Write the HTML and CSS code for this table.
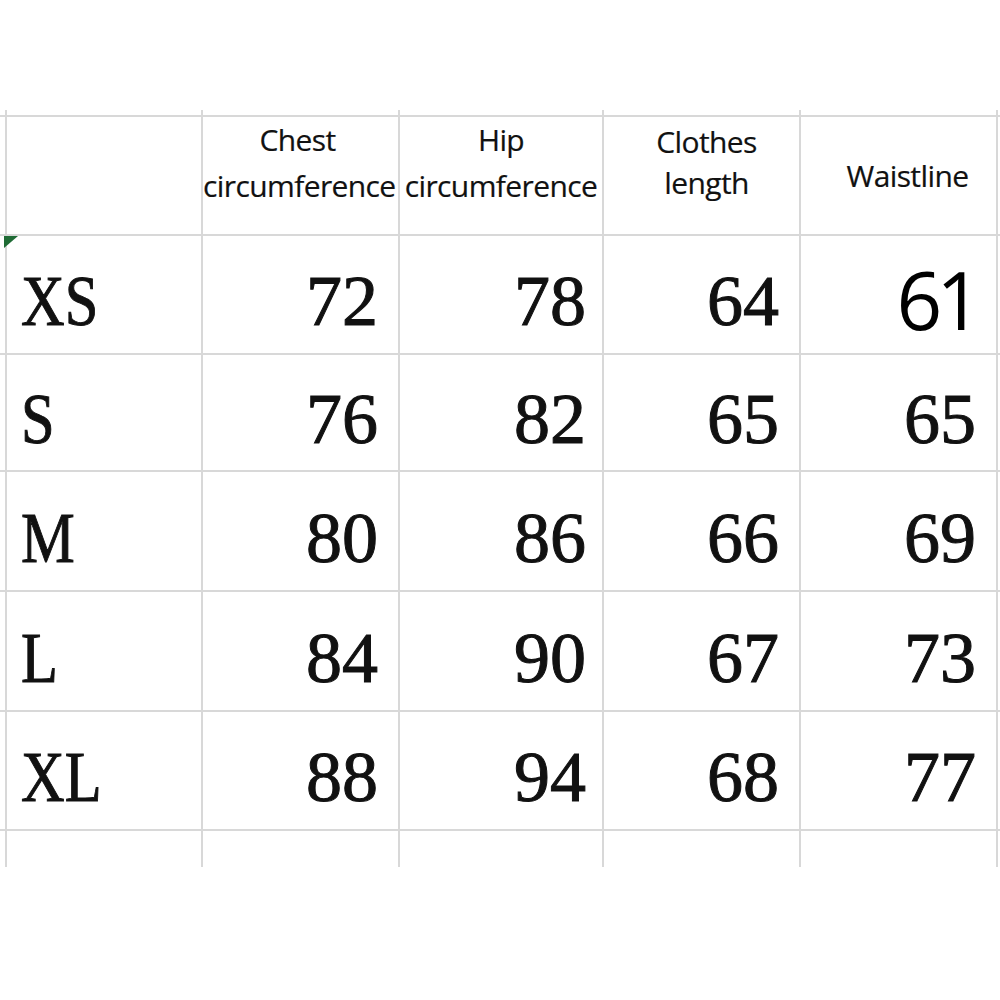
FILE: index.html
```html
<!DOCTYPE html>
<html>
<head>
<meta charset="utf-8">
<link rel="stylesheet" href="styles.css">
</head>
<body>
<div class="sheet">
  <div class="c"></div><div class="c"></div><div class="c"></div><div class="c"></div><div class="c"></div><div class="c"></div><div class="c"></div>

  <div class="c"></div>
  <div class="c"></div>
  <div class="c head h-chest">Chest<br>circumference</div>
  <div class="c head h-hip">Hip<br>circumference</div>
  <div class="c head h-len">Clothes<br>length</div>
  <div class="c head h-waist">Waistline</div>
  <div class="c"></div>

  <div class="c"></div>
  <div class="c lab"><span class="tri"></span><span class="sz">XS</span></div>
  <div class="c num">72</div>
  <div class="c num n2">78</div>
  <div class="c num">64</div>
  <div class="c num sans">61</div>
  <div class="c"></div>

  <div class="c"><span class="dot"></span></div>
  <div class="c lab"><span class="sz">S</span></div>
  <div class="c num">76</div>
  <div class="c num n2">82</div>
  <div class="c num">65</div>
  <div class="c num">65</div>
  <div class="c"></div>

  <div class="c"></div>
  <div class="c lab"><span class="sz">M</span></div>
  <div class="c num">80</div>
  <div class="c num n2">86</div>
  <div class="c num">66</div>
  <div class="c num">69</div>
  <div class="c"></div>

  <div class="c"></div>
  <div class="c lab"><span class="sz">L</span></div>
  <div class="c num">84</div>
  <div class="c num n2">90</div>
  <div class="c num">67</div>
  <div class="c num">73</div>
  <div class="c"></div>

  <div class="c"></div>
  <div class="c lab"><span class="sz">XL</span></div>
  <div class="c num">88</div>
  <div class="c num n2">94</div>
  <div class="c num">68</div>
  <div class="c num">77</div>
  <div class="c"></div>

  <div class="c"></div><div class="c"></div><div class="c"></div><div class="c"></div><div class="c"></div><div class="c"></div><div class="c"></div>
</div>
</body>
</html>
```

FILE: styles.css
```css
html, body {
  margin: 0;
  padding: 0;
  background: #ffffff;
}
body {
  width: 1000px;
  height: 1000px;
  overflow: hidden;
}
.sheet {
  margin-top: 110px;
  display: grid;
  grid-template-columns: 5px 194px 195px 202px 195px 195px 2px;
  grid-template-rows: 5px 117px 117px 115px 118px 118px 117px 36px;
  gap: 2px;
  background: #d8d8d8;
  width: 1000px;
}
.c {
  background: #ffffff;
  position: relative;
  min-width: 0;
  overflow: visible;
}
.head {
  font-family: "Open Sans", "Noto Sans", sans-serif;
  font-size: 30px;
  line-height: 46px;
  color: #111;
  text-align: center;
  padding-top: 0px;
  white-space: nowrap;
  letter-spacing: -0.6px;
  -webkit-text-stroke: 0.2px #111;
}
.h-chest { padding-right: 6px; }
.h-len {
  line-height: 41px;
  padding-top: 4px;
  padding-left: 10px;
}
.h-waist {
  padding-top: 36px;
  padding-left: 18px;
}
.lab {
  display: flex;
  align-items: center;
  padding-left: 14px;
  padding-top: 14px;
  font-family: "Liberation Serif", "Times New Roman", serif;
  font-size: 72px;
  color: #111;
}
.sz {
  display: inline-block;
  transform: scaleX(0.84);
  transform-origin: left center;
  -webkit-text-stroke: 1px #111;
}
.num {
  display: flex;
  align-items: center;
  justify-content: flex-end;
  padding-right: 20px;
  padding-top: 14px;
  font-family: "Liberation Serif", "Times New Roman", serif;
  font-size: 72px;
  color: #111;
  -webkit-text-stroke: 1px #111;
}
.n2 { padding-right: 16px; }
.sans {
  font-family: "Open Sans", "Noto Sans", sans-serif;
  font-size: 80px;
  letter-spacing: -6px;
  padding-right: 20px;
  padding-top: 8px;
  -webkit-text-stroke: 0;
  color: #000;
}
.tri {
  position: absolute;
  left: -3px;
  top: 0;
  width: 0;
  height: 0;
  border-top: 12px solid #1f6b35;
  border-right: 14px solid transparent;
}
.dot {
  position: absolute;
  right: -4px;
  top: 7px;
  width: 2px;
  height: 2px;
  background: #555;
}
```
